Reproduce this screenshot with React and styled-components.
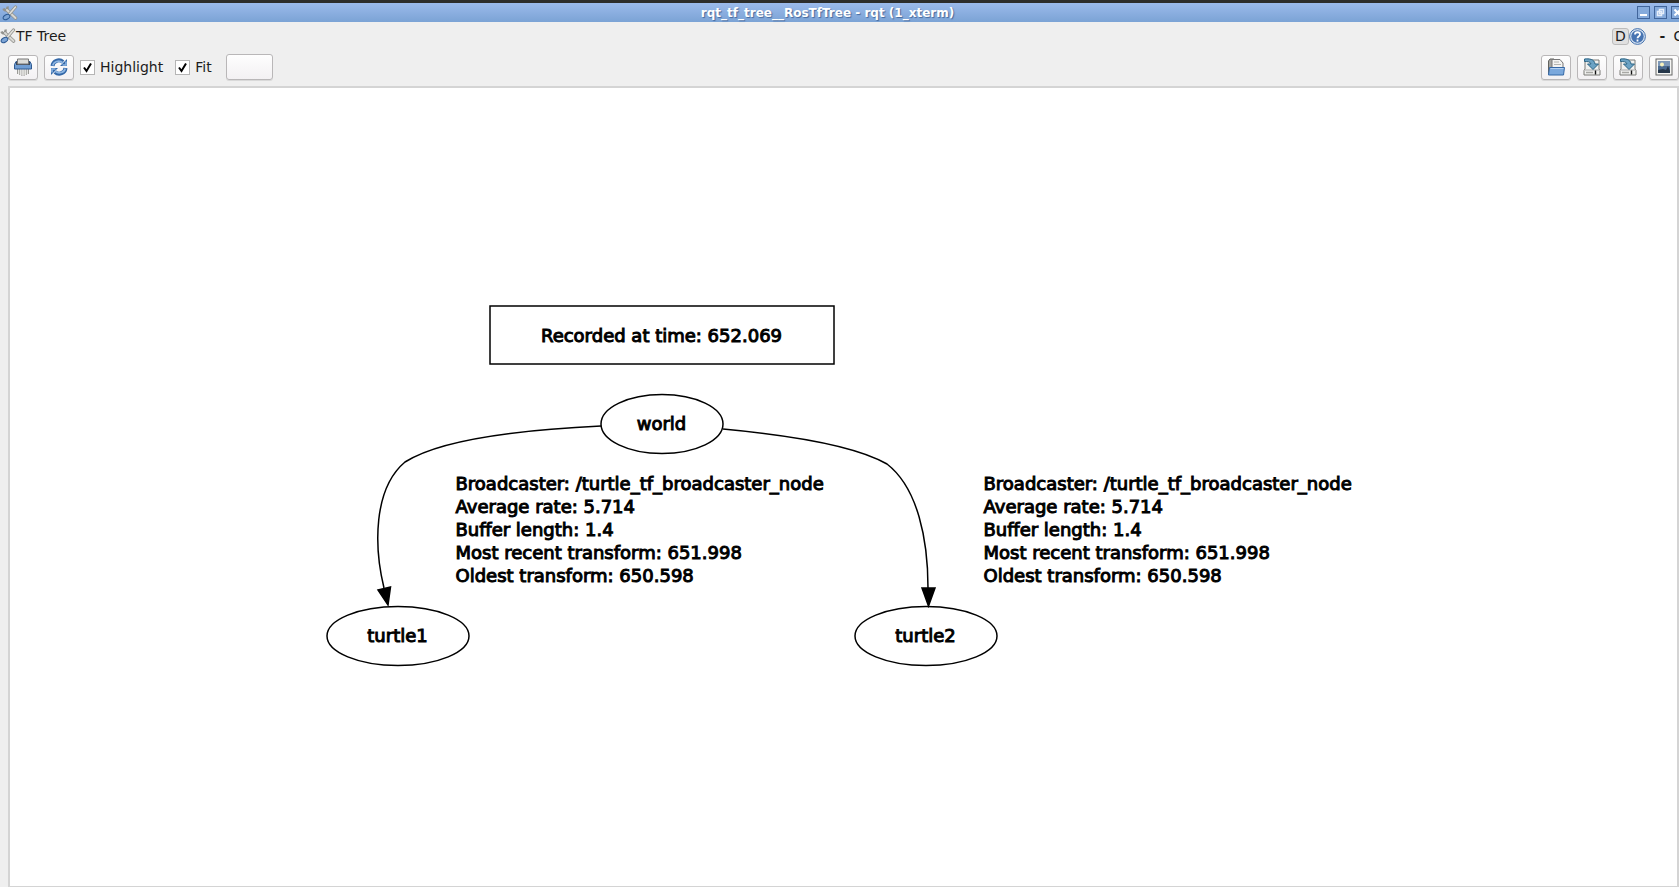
import React from "react";
import styled, { createGlobalStyle } from "styled-components";

const GlobalStyle = createGlobalStyle`
  * { box-sizing: border-box; }
  body { margin: 0; overflow: hidden; background: #efefef; }
  body, button, input { font-family: "DejaVu Sans", Verdana, sans-serif; }
`;

const Window = styled.main`
  display: flex;
  flex-direction: column;
  height: 100vh;
  overflow: hidden;
  border-top: 3px solid #2d2d2b;
  background: #efefef;
  color: #1c1c1c;
`;

const TitleBar = styled.header`
  display: grid;
  grid-template-columns: 64px 1fr 64px;
  align-items: center;
  flex: none;
  height: 19px;
  padding-left: 2px;
  background: linear-gradient(#9bbaeb, #7ba3d5);
`;

const Title = styled.h1`
  margin: 0;
  padding-right: 26px;
  text-align: center;
  font-size: 12px;
  line-height: 16px;
  font-weight: bold;
  color: #fff;
  text-shadow: 1px 1px 1px #44689c;
`;

const WindowButtons = styled.div`
  display: flex;
  gap: 4px;
  padding-left: 22px;
  overflow: hidden;
`;

const WindowButton = styled.button`
  display: flex;
  flex: none;
  width: 13px;
  height: 13px;
  padding: 0;
  border: 1px solid #41659b;
  background: #86abdc;
`;

const PluginBar = styled.div`
  display: flex;
  align-items: center;
  flex: none;
  height: 28px;
  overflow: hidden;
`;

const PluginName = styled.h2`
  margin: 0 auto 0 0;
  font-size: 14px;
  line-height: 20px;
  font-weight: normal;
`;

const PluginActions = styled.div`
  display: flex;
  align-items: center;
  flex: none;
  width: 67px;
  overflow: hidden;
`;

const FlatButton = styled.button`
  display: flex;
  align-items: center;
  justify-content: center;
  flex: none;
  width: ${(p) => p.$width || 17}px;
  height: 17px;
  margin-left: ${(p) => p.$gap || 0}px;
  padding: 0;
  border: ${(p) => (p.$boxed ? "1px solid #bcbcbc" : "0")};
  border-radius: 3px;
  background: ${(p) => (p.$boxed ? "#e0e0e0" : "none")};
  color: #1c1c1c;
  font-size: 14px;
  font-weight: ${(p) => (p.$bold ? "bold" : "normal")};
  line-height: 16px;
`;

const Toolbar = styled.div`
  display: flex;
  align-items: center;
  justify-content: space-between;
  flex: none;
  height: 36px;
  padding: 0 0 2px 8px;
`;

const ToolGroup = styled.div`
  display: flex;
  align-items: center;
  gap: 6px;
`;

const ToolButton = styled.button`
  display: flex;
  align-items: center;
  justify-content: center;
  width: ${(p) => (p.$wide ? 47 : 30)}px;
  height: ${(p) => (p.$wide ? 26 : 25)}px;
  padding: 0;
  border: 1px solid #b9b7b8;
  border-radius: 3px;
  background: linear-gradient(#fefefe, #f3f1f3);
  box-shadow: 0 1px 0 #d9d9d9;
`;

const CheckLabel = styled.label`
  display: flex;
  align-items: center;
  gap: 5px;
  margin-right: ${(p) => (p.$last ? 8 : 6)}px;
  font-size: 14px;
  line-height: 20px;
`;

const CheckBox = styled.input`
  appearance: none;
  width: 15px;
  height: 15px;
  margin: 0;
  border: 1px solid #b5b5b5;
  background: #fff;
  &:checked {
    background: #fff
      url("data:image/svg+xml,%3Csvg xmlns='http://www.w3.org/2000/svg' viewBox='0 0 13 13'%3E%3Cpath d='M3 6.5L5.5 10 10 2.5' fill='none' stroke='%23000' stroke-width='2'/%3E%3C/svg%3E")
      center / 13px 13px;
  }
`;

const GraphView = styled.section`
  display: flex;
  align-items: center;
  justify-content: center;
  flex: 1;
  min-height: 0;
  margin-left: 8px;
  border: 2px solid #d4d4d4;
  border-bottom-width: 1px;
  background: #fff;
`;

const Diagram = styled.div`
  position: relative;
  flex: none;
  width: 1036px;
  height: 366px;
  color: #000;
  font-size: 18px;
  line-height: 23px;
  -webkit-text-stroke: 1px #000;
`;

const Edges = styled.svg`
  display: block;
  overflow: visible;
`;

const NodeLabel = styled.div`
  position: absolute;
  left: ${(p) => p.$x - 150}px;
  top: ${(p) => p.$y - 12}px;
  width: 300px;
  text-align: center;
`;

const EdgeLabel = styled.div`
  position: absolute;
  left: ${(p) => p.$x}px;
  top: ${(p) => p.$y}px;
  white-space: nowrap;
`;

const Line = styled.p`
  margin: 0;
`;

function ToolsIcon({ size }) {
  return (
    <svg width={size} height={size} viewBox="0 0 16 16" fill="none" aria-hidden="true">
      <path d="M5 5l8.500 8" stroke="#92928e" strokeWidth="3.600" strokeLinecap="round" />
      <path d="M1.500 3.500C2.500 6.500 6 6 5.500 1.500" stroke="#92928e" strokeWidth="2.400" />
      <path d="M5 5l8.500 8" stroke="#d8d8d4" strokeWidth="2" strokeLinecap="round" />
      <path d="M13.500 2L7 9.500" stroke="#92928e" strokeWidth="3.200" strokeLinecap="round" />
      <path d="M13.500 2L7 9.500" stroke="#e0e0dc" strokeWidth="1.600" strokeLinecap="round" />
      <ellipse cx="4.500" cy="12" rx="3.600" ry="2.300" transform="rotate(-30 4.500 12)" fill="#7da5d6" stroke="#2d5a94" />
    </svg>
  );
}

function ShredderIcon() {
  return (
    <svg width="20" height="20" viewBox="0 0 20 20" aria-hidden="true">
      <path d="M4.500 12v5M6.700 12v6M8.900 12v7M11.100 12v7M13.300 12v6M15.500 12v5" stroke="#9a9a96" />
      <path d="M5.600 12v5M7.800 12v6M10 12v6M12.200 12v6M14.400 12v5" stroke="#e4e4e0" />
      <path d="M3 4.500h14l1.500 3V12h-17V7.500z" fill="#6f9dd3" stroke="#315b91" />
      <path d="M3 5h14v3H3z" fill="#3c4a5c" />
      <path d="M4.500 7V2h11v5z" fill="#dcdcd8" stroke="#777" />
    </svg>
  );
}

function RefreshIcon() {
  return (
    <svg width="18" height="18" viewBox="0 0 18 18" aria-hidden="true">
      <g id="half">
        <path d="M2.500 8C3 3 9 .500 13 4" fill="none" stroke="#3468a8" strokeWidth="4" />
        <path d="M10 8h7V1z" fill="#3468a8" />
        <path d="M2.800 7.500C3.500 3.500 9 1.500 13 4.800M12.500 7h3.500V3.500" fill="none" stroke="#8db5e2" strokeWidth="1.600" />
      </g>
      <use href="#half" transform="rotate(180 9 9)" />
    </svg>
  );
}

function FolderIcon() {
  return (
    <svg width="20" height="20" viewBox="0 0 20 20" aria-hidden="true">
      <path d="M2.500 17V4l1.500-2h4l2 3v12z" fill="#a4a4a0" stroke="#62625e" />
      <path d="M6 12V2.500h8L17 6v6z" fill="#f3f3f1" stroke="#777" />
      <path d="M8 5h5M8 7.500h7" stroke="#b4b4b0" />
      <path d="M3.500 10.500h15L17.500 18h-15z" fill="#7ba8dc" stroke="#3568a6" />
      <path d="M4.500 11.500h13" stroke="#b3d0f0" />
    </svg>
  );
}

function SaveIcon() {
  return (
    <svg width="18" height="18" viewBox="0 0 18 18" aria-hidden="true">
      <path d="M2 2h14v9l1 1.500V17H1v-4.500L2 11z" fill="#f1f1ef" stroke="#7b7b77" />
      <path d="M2 12h14" stroke="#aaa" />
      <path d="M3 14.500h7" stroke="#a8a8a4" strokeWidth="1.500" />
      <path d="M12.500 12.500v4" stroke="#111" strokeWidth="1.400" />
      <path d="M1.500 1C6 .500 11.500 1 12 6h3.500l-5.500 5.500L4.500 6H8C7.500 3.500 4.500 3.500 1.500 3.500z" fill="#6ba2c4" stroke="#2c6484" />
    </svg>
  );
}

function ImageIcon() {
  return (
    <svg width="18" height="18" viewBox="0 0 18 18" aria-hidden="true">
      <rect x="1" y="1" width="16" height="16" fill="#f6f6f4" stroke="#666" />
      <rect x="3" y="3" width="12" height="12" fill="#49698f" />
      <path d="M3 3h12v5H3z" fill="#7d98b8" />
      <path d="M3 12l5-1 3 1 2-4 2 5v2H3z" fill="#26364a" />
      <circle cx="7" cy="6.500" r="2" fill="#f7f2bd" />
    </svg>
  );
}

function HelpIcon() {
  return (
    <svg width="17" height="17" viewBox="0 0 17 17" aria-hidden="true">
      <circle cx="8.500" cy="8.500" r="7.900" fill="#d2dfef" stroke="#4673ae" />
      <circle cx="8.500" cy="8.500" r="6.200" fill="#4774b2" />
      <path d="M6 6.500c0-3 5-3 5 0 0 1.800-2.500 1.500-2.500 3.700M8.500 11.500v2" fill="none" stroke="#fff" strokeWidth="1.800" />
    </svg>
  );
}

const glyphs = {
  Minimize: <path d="M2 8h7" stroke="#fff" strokeWidth="2" />,
  Restore: <path d="M4.500 2.500h4v4h-4zM2.500 4.500h4v4h-4z" stroke="#e6eefa" strokeWidth="1.500" fill="none" />,
  Close: <path d="M2.500 2.500l6 6M8.500 2.500l-6 6" stroke="#fff" strokeWidth="2" />,
};

const broadcast = [
  "Broadcaster: /turtle_tf_broadcaster_node",
  "Average rate: 5.714",
  "Buffer length: 1.4",
  "Most recent transform: 651.998",
  "Oldest transform: 650.598",
];

const nodes = [
  { label: "Recorded at time: 652.069", x: 336, y: 32 },
  { label: "world", x: 336, y: 120 },
  { label: "turtle1", x: 72, y: 332 },
  { label: "turtle2", x: 600, y: 332 },
];

function TransformTree() {
  return (
    <Diagram>
      <Edges width="1036" height="366" fill="none" stroke="#000" strokeWidth="1.500" aria-hidden="true">
        <rect x="164" y="2" width="344" height="58" />
        <ellipse cx="336" cy="120" rx="61" ry="29.500" />
        <ellipse cx="72" cy="332" rx="71" ry="29.500" />
        <ellipse cx="600" cy="332" rx="71" ry="29.500" />
        <path d="M275 122C211 125 118 133 79 158C47 185 48 243 58 284" />
        <path d="M397 125C451 130 525 139 561 160C592 184 602 236 602 284" />
        <path d="M52 286l12.500-3L62 301zM596 284h13l-6.500 18z" fill="#000" />
      </Edges>
      {nodes.map((n) => (
        <NodeLabel key={n.label} $x={n.x} $y={n.y}>{n.label}</NodeLabel>
      ))}
      {[130, 658].map((x) => (
        <EdgeLabel key={x} $x={x} $y={168}>
          {broadcast.map((line) => <Line key={line}>{line}</Line>)}
        </EdgeLabel>
      ))}
    </Diagram>
  );
}

export default function App() {
  return (
    <Window>
      <GlobalStyle />
      <TitleBar>
        <ToolsIcon size={16} />
        <Title>rqt_tf_tree__RosTfTree - rqt (1_xterm)</Title>
        <WindowButtons>
          {Object.entries(glyphs).map(([name, glyph]) => (
            <WindowButton key={name} aria-label={name}>
              <svg width="11" height="11" viewBox="0 0 11 11">{glyph}</svg>
            </WindowButton>
          ))}
        </WindowButtons>
      </TitleBar>
      <PluginBar>
        <ToolsIcon size={16} />
        <PluginName>TF Tree</PluginName>
        <PluginActions>
          <FlatButton $boxed>D</FlatButton>
          <FlatButton aria-label="Help"><HelpIcon /></FlatButton>
          <FlatButton $gap={12} $width={9} $bold>-</FlatButton>
          <FlatButton $gap={6} $width={12}>O</FlatButton>
        </PluginActions>
      </PluginBar>
      <Toolbar>
        <ToolGroup>
          <ToolButton aria-label="Clear buffer"><ShredderIcon /></ToolButton>
          <ToolButton aria-label="Refresh"><RefreshIcon /></ToolButton>
          <CheckLabel><CheckBox type="checkbox" defaultChecked />Highlight</CheckLabel>
          <CheckLabel $last><CheckBox type="checkbox" defaultChecked />Fit</CheckLabel>
          <ToolButton $wide aria-label="Fit in view" />
        </ToolGroup>
        <ToolGroup>
          <ToolButton aria-label="Load"><FolderIcon /></ToolButton>
          <ToolButton aria-label="Save as DOT"><SaveIcon /></ToolButton>
          <ToolButton aria-label="Save as SVG"><SaveIcon /></ToolButton>
          <ToolButton aria-label="Save as image"><ImageIcon /></ToolButton>
        </ToolGroup>
      </Toolbar>
      <GraphView aria-label="Transform tree">
        <TransformTree />
      </GraphView>
    </Window>
  );
}
